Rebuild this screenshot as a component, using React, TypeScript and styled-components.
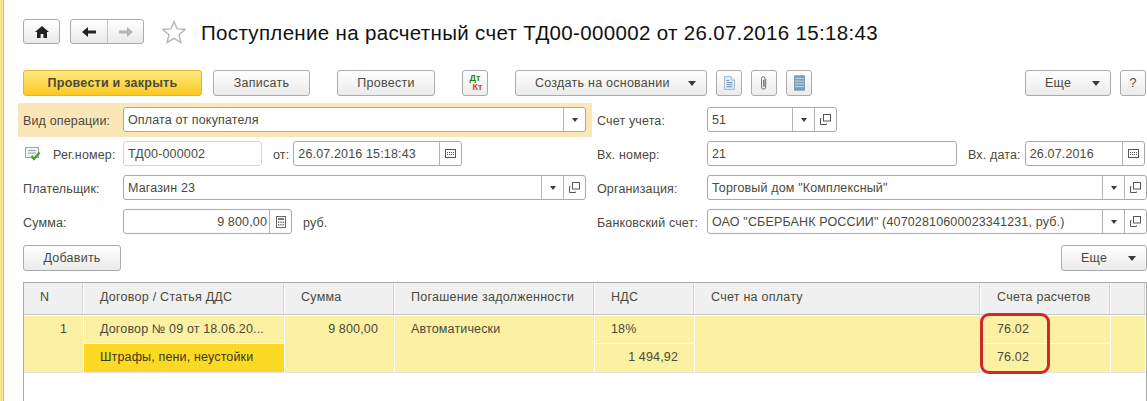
import React from 'react';
import styled, { createGlobalStyle } from 'styled-components';

const GlobalStyle = createGlobalStyle`
  html, body {
    margin: 0;
    padding: 0;
    background: #fff;
    overflow: hidden;
  }
  body {
    font-family: "Liberation Sans", Arial, sans-serif;
    font-size: 12.5px;
    letter-spacing: 0.15px;
    color: #4a4a3c;
  }
`;

const Page = styled.div`
  box-sizing: border-box;
  width: 1147px;
  height: 401px;
  padding: 19px 0 0 20px;
  border-left: 3px solid #f6e38c;
  box-shadow: inset 1px 0 0 #c9c08e;
  overflow: hidden;
`;

const TitleBar = styled.div`
  display: flex;
  align-items: center;
  height: 25px;
`;

const NavGroup = styled.div<{ $mr: number }>`
  display: flex;
  height: 25px;
  margin-right: ${(p) => p.$mr}px;
  border: 1px solid #ababab;
  border-radius: 3px;
  box-sizing: border-box;
  background: linear-gradient(#fff, #e9e9e9);
`;

const NavCell = styled.div<{ $w: number; $split?: boolean }>`
  display: flex;
  align-items: center;
  justify-content: center;
  width: ${(p) => p.$w}px;
  border-left: ${(p) => (p.$split ? '1px solid #c6c6c6' : 'none')};
`;

const Title = styled.h1`
  margin: 2px 0 0 15px;
  font-size: 20.5px;
  font-weight: 400;
  letter-spacing: 0.33px;
  color: #111;
  white-space: nowrap;
`;

const Toolbar = styled.div`
  display: flex;
  align-items: center;
  margin-top: 26px;
  padding-right: 1px;
`;

const Button = styled.button<{ $w: number; $ml?: number; $primary?: boolean; $push?: boolean; $menu?: boolean }>`
  box-sizing: border-box;
  display: flex;
  align-items: center;
  justify-content: ${(p) => (p.$menu ? 'space-between' : 'center')};
  width: ${(p) => p.$w}px;
  height: 26px;
  margin-left: ${(p) => (p.$push ? 'auto' : `${p.$ml ?? 0}px`)};
  padding: ${(p) => (p.$menu ? '0 10px 0 19px' : '0')};
  border: 1px solid ${(p) => (p.$primary ? '#dcb93c' : '#ababab')};
  border-radius: 3px;
  background: ${(p) =>
    p.$primary ? 'linear-gradient(#fde882, #fbc91f)' : 'linear-gradient(#fff, #ebebeb)'};
  font: inherit;
  font-weight: ${(p) => (p.$primary ? 700 : 400)};
  letter-spacing: 0.25px;
  color: #4a4a3c;
`;

const Form = styled.div`
  display: grid;
  grid-template-columns: 563px 550px;
  column-gap: 11px;
  row-gap: 9px;
  margin-top: 11px;
`;

const FormRow = styled.div<{ $highlight?: boolean }>`
  display: flex;
  align-items: center;
  height: 25px;
  ${(p) =>
    p.$highlight
      ? `
    margin: -4px -6px -5px -5px;
    padding: 4px 6px 5px 5px;
    background: #fbe6b8;
  `
      : ''}
`;

const Label = styled.span<{ $w?: number; $ml?: number }>`
  flex: none;
  width: ${(p) => (p.$w ? `${p.$w}px` : 'auto')};
  margin-left: ${(p) => p.$ml ?? 0}px;
  padding-top: 2px;
  white-space: nowrap;
`;

const Field = styled.div<{ $w: number; $ml?: number; $light?: boolean }>`
  box-sizing: border-box;
  display: flex;
  flex: none;
  width: ${(p) => p.$w}px;
  height: 25px;
  margin-left: ${(p) => p.$ml ?? 0}px;
  border: 1px solid ${(p) => (p.$light ? '#d6d6d6' : '#a9a9a9')};
  border-radius: 3px;
  background: #fff;
`;

const Value = styled.div<{ $right?: boolean }>`
  flex: 1;
  min-width: 0;
  padding: 0 2px 0 4px;
  line-height: 24px;
  text-align: ${(p) => (p.$right ? 'right' : 'left')};
  white-space: nowrap;
  overflow: hidden;
`;

const Addon = styled.div`
  display: flex;
  flex: none;
  align-items: center;
  justify-content: center;
  width: 21px;
  border-left: 1px solid #b4b4b4;
`;

const StatusIcon = styled.span`
  display: flex;
  flex: none;
  width: 28px;
  margin-left: 2px;
`;

const TableBar = styled.div`
  display: flex;
  justify-content: space-between;
  margin-top: 11px;
`;

const Table = styled.div`
  position: relative;
  box-sizing: border-box;
  height: 130px;
  margin-top: 11px;
  border: 1px solid #ababab;
  border-bottom: none;
`;

const COLUMNS = '60px 201px 110px 200px 100px 286px 130px 1fr';

const HeaderRow = styled.div`
  display: grid;
  grid-template-columns: ${COLUMNS};
  height: 31px;
  border-bottom: 1px solid #c9c9c9;
`;

const HeaderCell = styled.div`
  padding-left: 16px;
  border-right: 1px solid #fff;
  box-shadow: inset -1px 0 0 #d4d4d4;
  background: #f0f0f0;
  letter-spacing: 0.25px;
  line-height: 29px;
  white-space: nowrap;
`;

const Body = styled.div`
  display: grid;
  grid-template-columns: ${COLUMNS};
  grid-template-rows: 28px 28px;
  margin-top: 1px;
  border-bottom: 1px solid #e3e3e3;
`;

const Cell = styled.div<{ $span?: boolean; $right?: number; $accent?: boolean; $below?: boolean }>`
  grid-row: ${(p) => (p.$span ? 'span 2' : 'auto')};
  box-sizing: border-box;
  padding-left: 16px;
  padding-right: ${(p) => p.$right ?? 0}px;
  border-right: 1px solid #fff;
  border-bottom: ${(p) => (p.$below ? '1px solid #fff' : 'none')};
  background: ${(p) => (p.$accent ? '#fbd925' : '#fcf0a3')};
  color: ${(p) => (p.$accent ? '#3c3820' : '#4a4a3c')};
  line-height: 27px;
  text-align: ${(p) => (p.$right ? 'right' : 'left')};
  white-space: nowrap;
`;

const Callout = styled.div`
  position: absolute;
  left: 956px;
  top: 30px;
  box-sizing: border-box;
  width: 70px;
  height: 61px;
  border: 3px solid #d3262b;
  border-radius: 9px;
`;

const DebitCredit = styled.span`
  display: flex;
  flex-direction: column;
  font-family: "Liberation Sans", sans-serif;
  font-size: 9px;
  font-weight: 700;
  line-height: 9px;
  letter-spacing: 0;
`;

const Debit = styled.span`
  color: #2f7d12;
`;

const Credit = styled.span`
  margin-left: 5px;
  color: #e6333a;
`;

const Caret = ({ big }: { big?: boolean }): JSX.Element => (
  <svg width={big ? 8 : 6} height={big ? 5 : 4} viewBox="0 0 10 6" preserveAspectRatio="none">
    <path d="M0 0h10L5 6z" fill="#3c3c3c" />
  </svg>
);

const OpenIcon = (): JSX.Element => (
  <svg width="11" height="11" viewBox="0 0 11 11" fill="none" stroke="#555">
    <rect x="3.5" y="0.5" width="7" height="6.5" fill="#fff" />
    <path d="M1.5 4.5h-1v6h6v-1" />
  </svg>
);

const CalendarIcon = (): JSX.Element => (
  <svg width="11" height="9" viewBox="0 0 11 9">
    <rect x="0.5" y="0.5" width="10" height="8" fill="#fff" stroke="#555" />
    <path d="M2 3h1v1H2zM4 3h1v1H4zM6 3h1v1H6zM8 3h1v1H8zM2 5h1v1H2zM4 5h1v1H4zM6 5h1v1H6zM8 5h1v1H8z" fill="#555" />
  </svg>
);

const CalculatorIcon = (): JSX.Element => (
  <svg width="10" height="12" viewBox="0 0 10 12">
    <rect x="0.5" y="0.5" width="9" height="11" fill="#fff" stroke="#666" />
    <rect x="2" y="2" width="6" height="2" fill="#777" />
    <path d="M2 5.5h1.4v1.4H2zM4.3 5.5h1.4v1.4H4.3zM6.6 5.5H8v1.4H6.6zM2 8h1.4v1.4H2zM4.3 8h1.4v1.4H4.3zM6.6 8H8v1.4H6.6z" fill="#777" />
  </svg>
);

const StatusGlyph = (): JSX.Element => (
  <svg width="16" height="14" viewBox="0 0 16 14">
    <rect x="0.5" y="0.5" width="13" height="10" fill="#eef3f5" stroke="#9aa7ad" />
    <path d="M3 3.5h8M3 6h8" stroke="#9aa7ad" />
    <path d="M6.5 9l2.5 3L14.5 5.5" fill="none" stroke="#45a02c" strokeWidth="2.2" />
  </svg>
);

const DocIcon = (): JSX.Element => (
  <svg width="11" height="14" viewBox="0 0 13 16">
    <path d="M.5.5h8l4 4v11H.5z" fill="#e4eff9" stroke="#8fabc4" />
    <path d="M8.5.5v4h4" fill="#fff" stroke="#8fabc4" />
    <path d="M3 5h3M3 7.5h7M3 10h7M3 12.5h7" stroke="#5b7891" />
  </svg>
);

const ClipIcon = (): JSX.Element => (
  <svg width="8" height="16" viewBox="0 0 9 17" fill="none" stroke="#666" strokeWidth="1">
    <path d="M6.5 4v9a2.4 2.4 0 0 1-4.8 0V3.2a1.9 1.9 0 0 1 3.8 0v8.5a.8.8 0 0 1-1.6 0V5" />
  </svg>
);

const StackIcon = (): JSX.Element => (
  <svg width="11" height="16" viewBox="0 0 12 17">
    <rect width="12" height="17" rx="1" fill="#7a9db6" />
    <path d="M1 3.5h10M1 6.5h10M1 9.5h10M1 12.5h10" stroke="#cfe0ec" />
  </svg>
);

const HomeIcon = (): JSX.Element => (
  <svg width="14" height="12" viewBox="0 0 14 12">
    <path d="M7 0L0 6h2v6h3.6V8h2.8v4H12V6h2z" fill="#222" />
  </svg>
);

const ArrowIcon = ({ color, right }: { color: string; right?: boolean }): JSX.Element => (
  <svg width="14" height="10" viewBox="0 0 14 10">
    <path d={right ? 'M14 5L8 0v3.5H0v3h8V10z' : 'M0 5l6-5v3.5h8v3H6V10z'} fill={color} />
  </svg>
);

const StarSlot = styled.span`
  display: flex;
  margin-left: 18px;
`;

const StarIcon = (): JSX.Element => (
  <StarSlot>
    <svg width="24" height="24" viewBox="0 0 24 24" fill="none" stroke="#b5b5b5" strokeWidth="1.4">
      <path d="M12 1.5l3.1 7.4 8 .6-6.1 5.2 1.9 7.8L12 18.3l-6.9 4.2L7 14.7.9 9.5l8-.6z" />
    </svg>
  </StarSlot>
);

export default function App(): JSX.Element {
  return (
    <Page>
      <GlobalStyle />
      <TitleBar>
        <NavGroup $mr={10}>
          <NavCell $w={35}>
            <HomeIcon />
          </NavCell>
        </NavGroup>
        <NavGroup $mr={0}>
          <NavCell $w={36}>
            <ArrowIcon color="#222" />
          </NavCell>
          <NavCell $w={35} $split>
            <ArrowIcon color="#b4b4b4" right />
          </NavCell>
        </NavGroup>
        <StarIcon />
        <Title>Поступление на расчетный счет ТД00-000002 от 26.07.2016 15:18:43</Title>
      </TitleBar>

      <Toolbar>
        <Button $w={179} $primary>Провести и закрыть</Button>
        <Button $w={97} $ml={11}>Записать</Button>
        <Button $w={98} $ml={27}>Провести</Button>
        <Button $w={26} $ml={27}>
          <DebitCredit>
            <Debit>Дт</Debit>
            <Credit>Кт</Credit>
          </DebitCredit>
        </Button>
        <Button $w={192} $ml={27} $menu>
          Создать на основании <Caret big />
        </Button>
        <Button $w={26} $ml={9}><DocIcon /></Button>
        <Button $w={26} $ml={9}><ClipIcon /></Button>
        <Button $w={26} $ml={9}><StackIcon /></Button>
        <Button $w={86} $push $menu>
          Еще <Caret big />
        </Button>
        <Button $w={26} $ml={9}>?</Button>
      </Toolbar>

      <Form>
        <FormRow $highlight>
          <Label $w={100}>Вид операции:</Label>
          <Field $w={463}>
            <Value>Оплата от покупателя</Value>
            <Addon><Caret /></Addon>
          </Field>
        </FormRow>
        <FormRow>
          <Label $w={110}>Счет учета:</Label>
          <Field $w={130}>
            <Value>51</Value>
            <Addon><Caret /></Addon>
            <Addon><OpenIcon /></Addon>
          </Field>
        </FormRow>

        <FormRow>
          <StatusIcon><StatusGlyph /></StatusIcon>
          <Label $w={70}>Рег.номер:</Label>
          <Field $w={139} $light>
            <Value>ТД00-000002</Value>
          </Field>
          <Label $ml={11}>от:</Label>
          <Field $w={169} $ml={4}>
            <Value>26.07.2016 15:18:43</Value>
            <Addon><CalendarIcon /></Addon>
          </Field>
        </FormRow>
        <FormRow>
          <Label $w={110}>Вх. номер:</Label>
          <Field $w={250}>
            <Value>21</Value>
          </Field>
          <Label $ml={11}>Вх. дата:</Label>
          <Field $w={120} $ml={4}>
            <Value>26.07.2016</Value>
            <Addon><CalendarIcon /></Addon>
          </Field>
        </FormRow>

        <FormRow>
          <Label $w={100}>Плательщик:</Label>
          <Field $w={463}>
            <Value>Магазин 23</Value>
            <Addon><Caret /></Addon>
            <Addon><OpenIcon /></Addon>
          </Field>
        </FormRow>
        <FormRow>
          <Label $w={110}>Организация:</Label>
          <Field $w={440}>
            <Value>Торговый дом "Комплексный"</Value>
            <Addon><Caret /></Addon>
            <Addon><OpenIcon /></Addon>
          </Field>
        </FormRow>

        <FormRow>
          <Label $w={100}>Сумма:</Label>
          <Field $w={169}>
            <Value $right>9 800,00</Value>
            <Addon><CalculatorIcon /></Addon>
          </Field>
          <Label $ml={11}>руб.</Label>
        </FormRow>
        <FormRow>
          <Label $w={110}>Банковский счет:</Label>
          <Field $w={440}>
            <Value>ОАО "СБЕРБАНК РОССИИ" (40702810600023341231, руб.)</Value>
            <Addon><Caret /></Addon>
            <Addon><OpenIcon /></Addon>
          </Field>
        </FormRow>
      </Form>

      <TableBar>
        <Button $w={98}>Добавить</Button>
        <Button $w={86} $menu>
          Еще <Caret big />
        </Button>
      </TableBar>

      <Table>
        <HeaderRow>
          <HeaderCell>N</HeaderCell>
          <HeaderCell>Договор / Статья ДДС</HeaderCell>
          <HeaderCell>Сумма</HeaderCell>
          <HeaderCell>Погашение задолженности</HeaderCell>
          <HeaderCell>НДС</HeaderCell>
          <HeaderCell>Счет на оплату</HeaderCell>
          <HeaderCell>Счета расчетов</HeaderCell>
          <HeaderCell />
        </HeaderRow>
        <Body>
          <Cell $span $right={16}>1</Cell>
          <Cell $below>Договор № 09 от 18.06.20...</Cell>
          <Cell $span $right={16}>9 800,00</Cell>
          <Cell $span>Автоматически</Cell>
          <Cell $below>18%</Cell>
          <Cell $span />
          <Cell $below>76.02</Cell>
          <Cell $span />
          <Cell $accent>Штрафы, пени, неустойки</Cell>
          <Cell $right={16}>1 494,92</Cell>
          <Cell>76.02</Cell>
        </Body>
        <Callout />
      </Table>
    </Page>
  );
}
